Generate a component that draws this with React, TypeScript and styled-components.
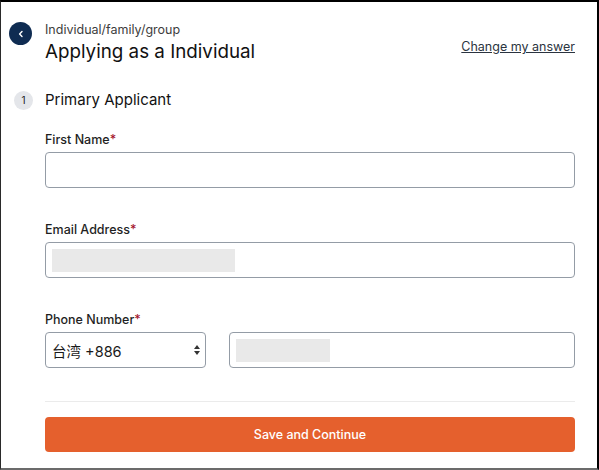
import React from 'react';
import styled, { createGlobalStyle } from 'styled-components';

const GlobalStyle = createGlobalStyle`
    html, body {
        margin: 0;
        padding: 0;
        background: #fff;
    }
    body {
        font-family: Inter, 'Noto Sans', 'Noto Sans CJK SC', sans-serif;
        color: #1d1d1f;
    }
`;

const Frame = styled.div`
    box-sizing: border-box;
    width: 599px;
    height: 470px;
    border-top: 2px solid #000;
    border-left: 1px solid #2a2a2a;
    border-right: 2px solid #000;
    border-bottom: 2px solid #6b6b6b;
    display: flex;
    flex-direction: column;
    padding: 20px 22px 0 0;
`;

const Header = styled.div`
    display: flex;
    align-items: flex-start;
    padding-left: 8px;
`;

const BackButton = styled.button`
    width: 23px;
    height: 23px;
    border-radius: 50%;
    border: none;
    padding: 0;
    background: #0f2c52;
    display: flex;
    align-items: center;
    justify-content: center;
    margin-right: 13px;
    cursor: pointer;
`;

const HeaderText = styled.div`
    display: flex;
    flex-direction: column;
    flex: 1;
`;

const Eyebrow = styled.div`
    font-size: 12.5px;
    line-height: 16px;
    color: #3d3d3d;
`;

const Title = styled.h1`
    margin: 2px 0 0;
    font-size: 18.8px;
    line-height: 24px;
    font-weight: 400;
    color: #111;
`;

const ChangeLink = styled.a`
    margin-top: 17px;
    font-size: 12.5px;
    line-height: 16px;
    color: #2b3440;
    text-decoration: underline;
    cursor: pointer;
`;

const StepRow = styled.div`
    display: flex;
    align-items: center;
    margin-top: 26px;
    padding-left: 13px;
`;

const StepBadge = styled.span`
    width: 19px;
    height: 19px;
    border-radius: 50%;
    background: #e4e6ea;
    font-size: 10px;
    color: #222;
    display: flex;
    align-items: center;
    justify-content: center;
    margin-right: 12px;
`;

const StepTitle = styled.div`
    font-size: 15px;
    line-height: 20px;
    color: #111;
`;

const Form = styled.div`
    display: flex;
    flex-direction: column;
    flex-shrink: 0;
    padding-left: 44px;
`;

const Field = styled.div<{ first?: boolean }>`
    display: flex;
    flex-direction: column;
    margin-top: ${props => (props.first ? '22px' : '34px')};
`;

const Label = styled.label`
    font-size: 12.5px;
    line-height: 16px;
    font-weight: 500;
    color: #1f1f1f;
    margin-bottom: 4px;
`;

const Required = styled.span`
    color: #a3122a;
`;

const InputBox = styled.div`
    box-sizing: border-box;
    height: 36px;
    border: 1px solid #949ca6;
    border-radius: 4px;
    background: #fff;
    display: flex;
    align-items: center;
    padding: 0 6px;
`;

const Redacted = styled.span<{ w: number }>`
    display: block;
    width: ${props => props.w}px;
    height: 23px;
    background: #e9e9e9;
`;

const PhoneRow = styled.div`
    display: flex;
    gap: 23px;
`;

const SelectBox = styled(InputBox)`
    justify-content: space-between;
    padding: 0 4px 0 6px;
    font-size: 14.5px;
    color: #1a1a1a;
    flex: 0 0 161px;
`;

const PhoneInput = styled(InputBox)`
    flex: 1 1 auto;
    min-width: 0;
`;

const Divider = styled.hr`
    border: none;
    border-top: 1px solid #ebebeb;
    margin: 33px 0 0;
`;

const SubmitButton = styled.button`
    margin-top: 15px;
    height: 35px;
    border: none;
    border-radius: 4px;
    background: #e5602d;
    color: #fff;
    font-family: Inter, sans-serif;
    font-size: 12.5px;
    font-weight: 500;
    cursor: pointer;
`;

const Chevron = () => (
    <svg width="8" height="8" viewBox="0 0 8 8">
        <path d="M5 1.5 L2.6 4 L5 6.5" stroke="#fff" strokeWidth="1.4" fill="none" strokeLinecap="round" strokeLinejoin="round" />
    </svg>
);

const UpDown = () => (
    <svg width="8" height="12" viewBox="0 0 8 12">
        <path d="M4 1 L7 5 H1 Z" fill="#333" />
        <path d="M4 11 L7 7 H1 Z" fill="#333" />
    </svg>
);

const App = () => (
    <>
        <GlobalStyle />
        <Frame>
            <Header>
                <BackButton aria-label="Back">
                    <Chevron />
                </BackButton>
                <HeaderText>
                    <Eyebrow>Individual/family/group</Eyebrow>
                    <Title>Applying as a Individual</Title>
                </HeaderText>
                <ChangeLink>Change my answer</ChangeLink>
            </Header>
            <StepRow>
                <StepBadge>1</StepBadge>
                <StepTitle>Primary Applicant</StepTitle>
            </StepRow>
            <Form>
                <Field first>
                    <Label>
                        First Name<Required>*</Required>
                    </Label>
                    <InputBox />
                </Field>
                <Field>
                    <Label>
                        Email Address<Required>*</Required>
                    </Label>
                    <InputBox>
                        <Redacted w={183} />
                    </InputBox>
                </Field>
                <Field>
                    <Label>
                        Phone Number<Required>*</Required>
                    </Label>
                    <PhoneRow>
                        <SelectBox>
                            <span>台湾 +886</span>
                            <UpDown />
                        </SelectBox>
                        <PhoneInput>
                            <Redacted w={94} />
                        </PhoneInput>
                    </PhoneRow>
                </Field>
                <Divider />
                <SubmitButton>Save and Continue</SubmitButton>
            </Form>
        </Frame>
    </>
);

export default App;
